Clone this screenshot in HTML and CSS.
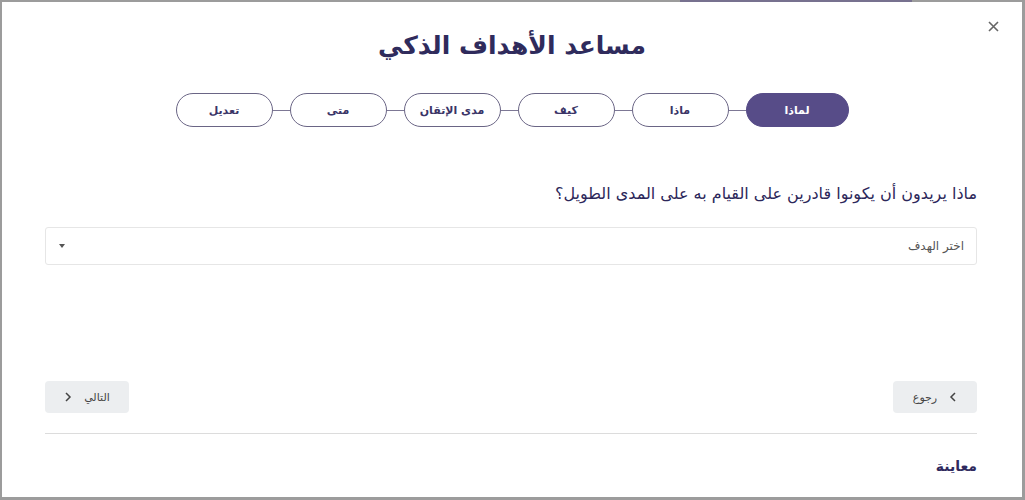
FILE: index.html
```html
<!DOCTYPE html>
<html lang="ar" dir="rtl">
<head>
<meta charset="utf-8">
<title>مساعد الأهداف الذكي</title>
<link rel="stylesheet" href="styles.css">
</head>
<body>
<div class="backdrop-strip"></div>
<div class="modal">
  <button class="close" aria-label="إغلاق">
    <svg width="11" height="11" viewBox="0 0 11 11"><path d="M1 1 L10 10 M10 1 L1 10" stroke="#666" stroke-width="1.6" fill="none"/></svg>
  </button>
  <h1 class="title">مساعد الأهداف الذكي</h1>
  <div class="steps">
    <div class="step active">لماذا</div>
    <div class="link"></div>
    <div class="step">ماذا</div>
    <div class="link"></div>
    <div class="step">كيف</div>
    <div class="link"></div>
    <div class="step">مدى الإتقان</div>
    <div class="link"></div>
    <div class="step">متى</div>
    <div class="link"></div>
    <div class="step">تعديل</div>
  </div>
  <div class="content">
    <p class="question">ماذا يريدون أن يكونوا قادرين على القيام به على المدى الطويل؟</p>
    <div class="select">
      <span class="placeholder">اختر الهدف</span>
      <span class="caret"></span>
    </div>
    <div class="nav">
      <button class="btn">
        <svg width="8" height="10" viewBox="0 0 8 10"><path d="M6 1 L2 5 L6 9" stroke="#444" stroke-width="1.5" fill="none"/></svg>
        <span>رجوع</span>
      </button>
      <button class="btn">
        <span>التالي</span>
        <svg width="8" height="10" viewBox="0 0 8 10"><path d="M2 1 L6 5 L2 9" stroke="#444" stroke-width="1.5" fill="none"/></svg>
      </button>
    </div>
    <hr class="divider">
    <div class="preview">معاينة</div>
  </div>
</div>
</body>
</html>
```

FILE: styles.css
```css
html, body {
  margin: 0;
  padding: 0;
}
body {
  background: #9c9c9c;
  font-family: "DejaVu Sans", "Noto Sans", sans-serif;
  width: 1025px;
  height: 500px;
  overflow: hidden;
  position: relative;
}
.backdrop-strip {
  position: absolute;
  top: 0;
  left: 680px;
  width: 232px;
  height: 3px;
  background: #77718f;
}
.modal {
  position: relative;
  margin: 2px 3px 0 2px;
  width: 1020px;
  height: 495px;
  background: #fff;
  box-sizing: border-box;
}
.close {
  position: absolute;
  top: 17px;
  left: 984px;
  width: 14px;
  height: 14px;
  padding: 0;
  border: 0;
  background: none;
  display: flex;
  align-items: center;
  justify-content: center;
}
.title {
  margin: 0;
  padding-top: 26px;
  text-align: center;
  font-size: 25px;
  line-height: 36px;
  font-weight: bold;
  color: #2f2b5c;
}
.steps {
  margin-top: 29px;
  display: flex;
  justify-content: center;
  align-items: center;
}
.step {
  box-sizing: border-box;
  width: 97px;
  height: 34px;
  border: 1px solid #6a6585;
  border-radius: 17px;
  display: flex;
  align-items: center;
  justify-content: center;
  font-size: 11px;
  font-weight: bold;
  color: #3a3467;
  background: #fff;
}
.step.active {
  width: 103px;
  background: #574c88;
  border-color: #574c88;
  color: #fff;
}
.link {
  width: 17px;
  height: 1px;
  background: #7d7895;
}
.content {
  padding: 0 45px 0 43px;
}
.question {
  margin: 57px 0 0;
  font-size: 16px;
  line-height: 20px;
  font-weight: normal;
  color: #2c275a;
}
.select {
  margin-top: 23px;
  height: 38px;
  box-sizing: border-box;
  border: 1px solid #e6e6e6;
  border-radius: 3px;
  display: flex;
  align-items: center;
  justify-content: space-between;
  padding: 0 12px 0 12px;
}
.placeholder {
  font-size: 12px;
  color: #555;
}
.caret {
  width: 0;
  height: 0;
  border-left: 3px solid transparent;
  border-right: 3px solid transparent;
  border-top: 4px solid #555;
  margin-left: 1px;
}
.nav {
  margin-top: 116px;
  display: flex;
  justify-content: space-between;
}
.btn {
  width: 84px;
  height: 32px;
  border: 0;
  border-radius: 4px;
  background: #eceef0;
  display: flex;
  align-items: center;
  justify-content: center;
  gap: 12px;
  font-family: inherit;
  font-size: 11px;
  color: #444;
  padding: 0;
}
.divider {
  margin: 20px 0 0;
  border: 0;
  border-top: 1px solid #dcdcdc;
  height: 0;
}
.preview {
  margin-top: 22px;
  font-size: 14px;
  line-height: 20px;
  font-weight: bold;
  color: #2f2a5e;
}
```
